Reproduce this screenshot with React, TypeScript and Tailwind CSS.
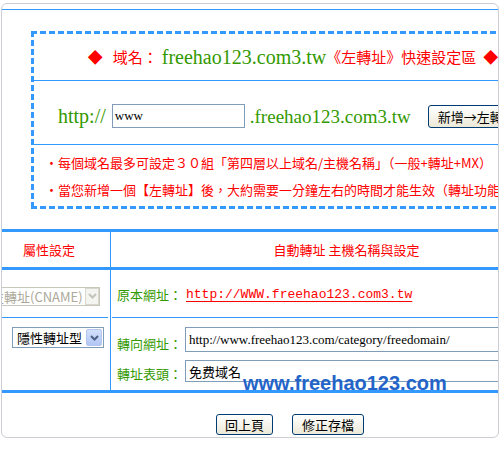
import React from 'react';

const cjk = "font-['Noto_Sans_CJK_TC',sans-serif]";
const serif = "font-['Liberation_Serif','Noto_Sans_CJK_TC',serif]";

const dashed =
  "[background:repeating-linear-gradient(90deg,#3399ff_0_6px,transparent_6px_9px)_top_left/100%_3px_no-repeat,repeating-linear-gradient(90deg,#3399ff_0_6px,transparent_6px_9px)_bottom_left/100%_3px_no-repeat,repeating-linear-gradient(180deg,#3399ff_0_6px,transparent_6px_9px)_top_left/3px_100%_no-repeat,repeating-linear-gradient(180deg,#3399ff_0_6px,transparent_6px_9px)_top_right/3px_100%_no-repeat]";

function Arrow({ disabled }: { disabled?: boolean }) {
  return (
    <div
      className={
        disabled
          ? 'flex h-full w-[14px] items-center justify-center border border-[#d8d8d0] bg-[#f4f4f0]'
          : 'flex h-full w-[16px] items-center justify-center rounded-[2px] border border-[#b4c6ef] bg-gradient-to-b from-[#d4e0fb] to-[#b2c6f4]'
      }
    >
      <svg width="9" height="6" viewBox="0 0 9 6">
        <path d="M1 1l3.5 3.5L8 1" fill="none" stroke={disabled ? '#c4c4bc' : '#4d6185'} strokeWidth="2" />
      </svg>
    </div>
  );
}

function XpButton({ label, w }: { label: string; w: string }) {
  return (
    <button
      className={`${w} ${cjk} h-[21px] rounded-[3px] border border-[#003c74] bg-gradient-to-b from-white to-[#ece9d8] text-[13px] leading-none text-black`}
    >
      {label}
    </button>
  );
}

export default function App() {
  return (
    <div className="relative h-[450px] w-[500px] overflow-hidden bg-white">
      <div className="ml-[1px] mt-[3px] h-[435px] w-[498px] overflow-hidden rounded-[6px] border border-[#cdcdd5]">
        <div className="w-[580px]">
          <div className="mt-[5px] h-px bg-[#3399ff]" />

          {/* quick setup box */}
          <div className={`mx-[29px] mt-[21px] p-[3px] ${dashed}`}>
            <div className={`${cjk} flex h-[46px] items-center justify-center whitespace-nowrap pl-[2px] text-[15px] text-[#ff0000]`}>
              <span>◆</span>
              <span className="ml-[10px]">域名：</span>
              <span className={`${serif} ml-[4px] text-[20px] text-[#339900]`}>freehao123.com3.tw</span>
              <span>《左轉址》快速設定區</span>
              <span className="ml-[7px]">◆</span>
            </div>
            <div className="h-px bg-[#3399ff]" />
            <div className="flex h-[63px] items-center whitespace-nowrap pl-[24px] pt-[7px]">
              <span className={`${serif} text-[20px] leading-none text-[#339900]`}>http://</span>
              <input
                defaultValue="www"
                className={`${serif} ml-[6px] h-[24px] w-[133px] border border-[#7f9db9] px-[2px] text-[13px] text-black outline-none`}
              />
              <span className={`${serif} ml-[5px] text-[19px] leading-none text-[#339900]`}>.freehao123.com3.tw</span>
              <XpButton label="新增→左轉址" w="ml-[17px] w-[98px] h-[23px]" />
            </div>
            <div className="h-px bg-[#3399ff]" />
            <div className={`${cjk} whitespace-nowrap pb-[3px] pl-[11px] pt-[4px] text-[13px] leading-[27px] text-[#ff0000]`}>
              <div>・每個域名最多可設定３０組「第四層以上域名/主機名稱」（一般+轉址+MX）</div>
              <div>・當您新增一個【左轉址】後，大約需要一分鐘左右的時間才能生效（轉址功能</div>
            </div>
          </div>

          {/* settings table */}
          <div className="mt-[20px] h-[3px] bg-[#3399ff]" />
          <div className={`${cjk} flex h-[35px] text-[13px] text-[#ff0000]`}>
            <div className="flex w-[108px] items-center pl-[21px]">屬性設定</div>
            <div className="w-px bg-[#3399ff]" />
            <div className="flex flex-1 items-center justify-center">自動轉址 主機名稱與設定</div>
          </div>
          <div className="h-[3px] bg-[#3399ff]" />

          <div className="flex">
            <div className="mr-[2px] flex h-[48px] w-[106px] items-center overflow-hidden border-b border-[#3399ff] pt-[5px]">
              <div className="-ml-[14px] flex h-[19px] w-[112px] items-center border border-[#c9c7ba] bg-white pl-[2px]">
                <span className={`${cjk} flex-1 whitespace-nowrap text-[13px] leading-none text-[#aca899]`}>左轉址(CNAME)</span>
                <Arrow disabled />
              </div>
            </div>
            <div className="w-px bg-[#3399ff]" />
            <div className="ml-[1px] flex h-[48px] flex-1 items-center whitespace-nowrap border-b border-[#3399ff] pl-[5px] pt-[3px]">
              <span className={`${cjk} text-[13px] text-[#339900]`}>原本網址：</span>
              <a className="ml-[4px] font-['Liberation_Mono',monospace] text-[13px] text-[#ff0000] underline underline-offset-[3px]">
                http://WWW.freehao123.com3.tw
              </a>
            </div>
          </div>

          <div className="flex h-[72px]">
            <div className="w-[108px] pl-[10px] pt-[9px]">
              <div className="flex h-[21px] w-[92px] items-center border border-[#7f9db9] bg-white p-[1px] pl-[4px]">
                <span className={`${cjk} flex-1 whitespace-nowrap text-[13px] leading-none text-black`}>隱性轉址型</span>
                <Arrow />
              </div>
            </div>
            <div className="w-px bg-[#3399ff]" />
            <div className="flex-1 pl-[6px]">
              <div className="mt-[9px] flex items-end">
                <span className={`${cjk} w-[68px] text-[13px] leading-[16px] text-[#339900]`}>轉向網址：</span>
                <input
                  defaultValue="http://www.freehao123.com/category/freedomain/"
                  className={`${serif} h-[25px] w-[390px] border border-[#7f9db9] px-[3px] text-[13px] text-black outline-none`}
                />
              </div>
              <div className="mt-[8px] flex items-end">
                <span className={`${cjk} w-[68px] text-[13px] leading-[16px] text-[#339900]`}>轉址表頭：</span>
                <input
                  defaultValue="免费域名"
                  className={`${cjk} h-[22px] w-[390px] border border-[#7f9db9] px-[3px] text-[13px] text-black outline-none`}
                />
              </div>
            </div>
          </div>
          <div className="h-[3px] bg-[#3399ff]" />

          <div className="flex justify-center gap-[19px] pr-[4px] pt-[21px]">
            <XpButton label="回上頁" w="w-[57px]" />
            <XpButton label="修正存檔" w="w-[72px]" />
          </div>
        </div>
      </div>

      {/* watermark */}
      <div className="absolute left-[243px] top-[373px] font-['Liberation_Sans',sans-serif] text-[20px] font-bold leading-none text-[#2464c8]">
        www.freehao123.com
      </div>
    </div>
  );
}
